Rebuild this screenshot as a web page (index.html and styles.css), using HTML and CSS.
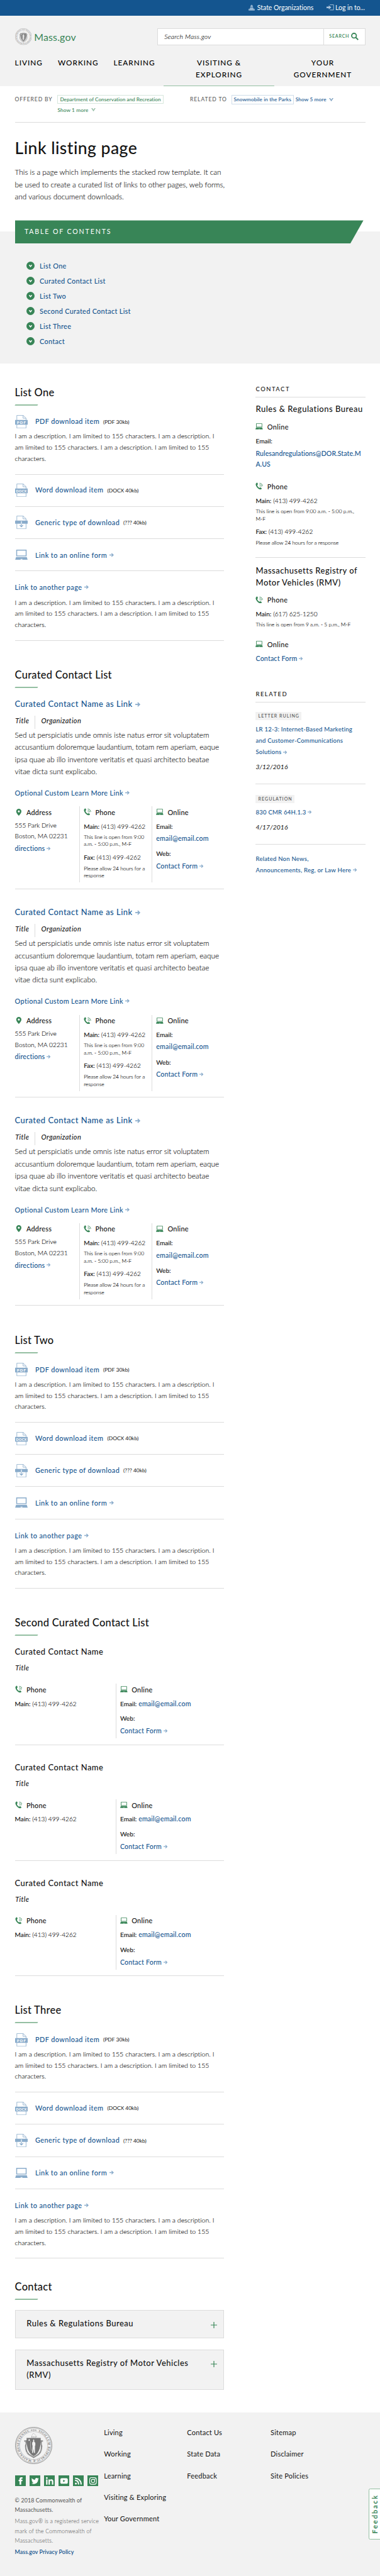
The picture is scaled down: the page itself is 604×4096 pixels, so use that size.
FILE: index.html
```html
<!DOCTYPE html>
<html lang="en">
<head>
<meta charset="utf-8">
<title>Link listing page | Mass.gov</title>
<link rel="stylesheet" href="styles.css">
</head>
<body>
<svg class="sprite" aria-hidden="true">
  <symbol id="arrow" viewBox="0 0 12 12"><path d="M0 6h9.500M5.600 1.600 10.200 6l-4.600 4.400" fill="none" stroke="currentColor" stroke-width="2.300"/></symbol>
  <symbol id="chev" viewBox="0 0 12 9"><path d="M0 0 3.300 0 6 4.200 8.700 0 12 0 6 9z" fill="currentColor"/></symbol>
  <symbol id="laptop" viewBox="0 0 34 28"><path d="M3 0h28v18H3zM5.500 2.500v13h23v-13z" fill="currentColor" fill-rule="evenodd"/><path d="M2.500 20h29L34 28H0zM14.500 25h5.500l-.5 1.500h-4.500z" fill="currentColor" fill-rule="evenodd"/></symbol>
  <symbol id="phone" viewBox="0 0 20 20"><path d="M4.500 1C5.500.6 7 4.800 6.500 5.600 6 6.500 4.800 6.800 5 8c.6 2.500 3 5.500 5.200 6.600 1.200.4 1.800-1 2.800-1.200 1-.2 4.500 2.400 4 3.400-.8 1.900-3 2.700-5 2.200C6.500 17.500.8 11 .8 5.200.8 3.300 2.500 1.400 4.500 1z" fill="currentColor"/><g fill="none" stroke="currentColor" stroke-width="1.500"><path d="M11 9.500a2.500 2.500 0 0 1 2.600 2"/><path d="M11 6c3 0 5 2 5.400 5"/><path d="M11 2.200c5 .2 8 3.800 8.200 8"/></g></symbol>
  <symbol id="pin" viewBox="0 0 14 19"><path d="M7 0a7 7 0 0 1 7 7c0 4.500-4 8-7 12C4 15 0 11.500 0 7a7 7 0 0 1 7-7zm0 4.300a2.700 2.700 0 1 0 0 5.400 2.700 2.700 0 0 0 0-5.400z" fill="currentColor"/></symbol>
  <symbol id="sheet" viewBox="0 0 34 36"><path d="M4.700.7h17l7.800 7.600v27H4.700z" fill="#fff" stroke="currentColor" stroke-width="1.400"/><path d="M21.500.7v7.800h8" fill="none" stroke="currentColor" stroke-width="1.400"/></symbol>
  <symbol id="pdf" viewBox="0 0 34 36"><use href="#sheet"/><path d="M0 13h34v13H0z" fill="currentColor"/><text x="17" y="23.400" text-anchor="middle" textLength="25" class="icon-label">PDF</text></symbol>
  <symbol id="docx" viewBox="0 0 34 36"><use href="#sheet"/><path d="M0 13h34v13H0z" fill="currentColor"/><text x="17" y="23.400" text-anchor="middle" textLength="29" lengthAdjust="spacingAndGlyphs" class="icon-label">DOCX</text></symbol>
  <symbol id="file" viewBox="0 0 34 36"><use href="#sheet"/><path d="M0 13h34v8.500H0z" fill="currentColor"/><path d="M17 15v7" stroke="#fff" stroke-width="2"/><path d="M17 21.500v8M12.500 25.500 17 30l4.500-4.500" fill="none" stroke="currentColor" stroke-width="2"/></symbol>
  <symbol id="seal" viewBox="0 0 100 100">
    <g fill="none" stroke="currentColor"><circle cx="50" cy="50" r="49.200" stroke-width="1.300"/><circle cx="50" cy="50" r="46.700" stroke-width=".7"/><circle cx="50" cy="50" r="37.500" stroke-width="1" stroke-dasharray="1.200 .8"/></g>
    <path id="ring" d="M50 11a39 39 0 1 1-.01 0" fill="none"/>
    <text class="seal-text"><textPath href="#ring" startOffset="13" textLength="221">SIGILLUM REIPUBLICÆ MASSACHUSETTENSIS.</textPath></text>
    <path d="M41 8.500 46 7v3zM59 8.500 54 7v3z" fill="currentColor"/><circle cx="50" cy="8.500" r="2" fill="none" stroke="currentColor"/>
    <path d="M25 38h5v7l-1.500 6c0 12 4 20 10 24l11.500 7 11.500-7c6-4 10-12 10-24L70 45v-7h5" fill="none" stroke="currentColor" stroke-width="3.600" stroke-dasharray="2.600 .7"/>
    <path d="M31 29.500h38c0 20-1 39-19 49.500C32 68.500 31 49.500 31 29.500z" fill="currentColor"/>
    <path d="M45 28c-1-4 1-7 4-11 3 1 6 5 10 10" fill="none" stroke="currentColor" stroke-width=".5"/>
    <path d="M44 27h3m2 0h3m2 0h3" stroke="currentColor" stroke-width="1.600"/>
    <path d="m38 32 .9 2.200 2.300.2-1.800 1.500.6 2.300-2-1.300-2 1.300.6-2.300-1.800-1.500 2.300-.2z" fill="#f2f2f2"/>
    <path d="M48.500 36c0-3 3-3 3 0v4l3 3v7l-1 1v19h-2.500l-1-11-1.500 11H46l1-19-1-3v-6l2.500-2z" fill="#f2f2f2"/><path d="M42 38c-1.500 9-.5 18 2 26" fill="none" stroke="#f2f2f2" stroke-width=".8"/>
  </symbol>
</svg>

<div class="page">
  <div class="utility">
    <a class="utility-item"><svg class="ic-dome" viewBox="0 0 16 16"><path d="M8 0v2M5 6a3 4 0 0 1 6 0zM4.500 7h7v2h-7zM3.500 10h9v2h-9zM0 12.500h3v-.5h10v.5h3V16H0z" fill="#a9c3dc" stroke="#a9c3dc" stroke-width=".6"/><path d="M2 13.300v1.500m3-1.500v1.500m3-1.500v1.500m3-1.500v1.500m3-1.500v1.500M6.500 7.500V9m3-1.500V9" stroke="#14558f" stroke-width=".8"/></svg><span>State Organizations</span></a>
    <a class="utility-item"><svg class="ic-login" viewBox="0 0 20 16"><path d="M9 1h10v14H9" fill="none" stroke="#a9c3dc" stroke-width="1.600"/><path d="M0 6h6V2.500L13 8l-7 5.500V10H0z" fill="#a9c3dc"/></svg><span>Log in to...</span></a>
  </div>

  <header class="header">
    <div class="brand-row">
      <div class="brand"><svg class="brand-seal"><use href="#seal"/></svg><span>Mass.gov</span></div>
      <div class="search"><span class="search-input">Search Mass.gov</span><span class="search-btn">SEARCH<svg viewBox="0 0 20 20"><circle cx="8" cy="8" r="6.300" fill="none" stroke="currentColor" stroke-width="3"/><path d="m12.500 12.500 6.500 6.500" stroke="currentColor" stroke-width="3.400"/></svg></span></div>
    </div>
    <nav class="nav"><a>LIVING</a><a>WORKING</a><a>LEARNING</a><a class="nav-active">VISITING &amp;<br>EXPLORING</a><a class="nav-last">YOUR<br>GOVERNMENT</a></nav>
  </header>

  <div class="relations">
    <div class="rel rel-green"><span class="rel-label">OFFERED BY</span><span class="rel-body"><a class="chip">Department of Conservation and Recreation</a><a class="more">Show 1 more<svg><use href="#chev"/></svg></a></span></div>
    <div class="rel rel-blue"><span class="rel-label">RELATED TO</span><span class="rel-body"><a class="chip">Snowmobile in the Parks</a><a class="more">Show 5 more<svg><use href="#chev"/></svg></a></span></div>
  </div>

  <div class="intro">
    <h1>Link listing page</h1>
    <p>This is a page which implements the stacked row template. It can be used to create a curated list of links to other pages, web forms, and various document downloads.</p>
  </div>

  <section class="toc">
    <div class="toc-banner">TABLE OF CONTENTS</div>
    <ul class="toc-list">
      <li><svg viewBox="0 0 22 22"><circle cx="11" cy="11" r="11"/><path d="m7.500 9 3.500 4.200L14.500 9"/></svg><a>List One</a></li>
      <li><svg viewBox="0 0 22 22"><circle cx="11" cy="11" r="11"/><path d="m7.500 9 3.500 4.200L14.500 9"/></svg><a>Curated Contact List</a></li>
      <li><svg viewBox="0 0 22 22"><circle cx="11" cy="11" r="11"/><path d="m7.500 9 3.500 4.200L14.500 9"/></svg><a>List Two</a></li>
      <li><svg viewBox="0 0 22 22"><circle cx="11" cy="11" r="11"/><path d="m7.500 9 3.500 4.200L14.500 9"/></svg><a>Second Curated Contact List</a></li>
      <li><svg viewBox="0 0 22 22"><circle cx="11" cy="11" r="11"/><path d="m7.500 9 3.500 4.200L14.500 9"/></svg><a>List Three</a></li>
      <li><svg viewBox="0 0 22 22"><circle cx="11" cy="11" r="11"/><path d="m7.500 9 3.500 4.200L14.500 9"/></svg><a>Contact</a></li>
    </ul>
  </section>

  <div class="columns">
    <main class="main">
      <section class="block">
        <h2>List One</h2>
        <div class="dl"><div class="dl-row"><svg><use href="#pdf"/></svg><a class="link">PDF download item</a><small>(PDF 30kb)</small></div><p>I am a description. I am limited to 155 characters. I am a description. I am limited to 155 characters. I am a description. I am limited to 155 characters.</p></div>
        <div class="dl"><div class="dl-row"><svg><use href="#docx"/></svg><a class="link">Word download item</a><small>(DOCX 40kb)</small></div></div>
        <div class="dl"><div class="dl-row"><svg><use href="#file"/></svg><a class="link">Generic type of download</a><small>(??? 40kb)</small></div></div>
        <div class="dl"><div class="dl-row dl-form"><svg class="ic-form"><use href="#laptop"/></svg><a class="link">Link to an online form</a><svg class="arrow"><use href="#arrow"/></svg></div></div>
        <div class="dl dl-page"><div class="dl-link"><a class="link">Link to another page</a><svg class="arrow"><use href="#arrow"/></svg></div><p>I am a description. I am limited to 155 characters. I am a description. I am limited to 155 characters. I am a description. I am limited to 155 characters.</p></div>
      </section>

      <section class="block curated">
        <h2>Curated Contact List</h2>
        <article class="person">
          <h3><a class="link">Curated Contact Name as Link</a><svg class="arrow arrow-lg"><use href="#arrow"/></svg></h3>
          <div class="role"><em>Title</em><em>Organization</em></div>
          <p>Sed ut perspiciatis unde omnis iste natus error sit voluptatem accusantium doloremque laudantium, totam rem aperiam, eaque ipsa quae ab illo inventore veritatis et quasi architecto beatae vitae dicta sunt explicabo.</p>
          <div class="learn"><a class="link">Optional Custom Learn More Link</a><svg class="arrow"><use href="#arrow"/></svg></div>
          <div class="cards">
            <div class="card"><h4><svg class="ic-pin"><use href="#pin"/></svg>Address</h4><div class="addr">555 Park Drive<br>Boston, MA 02231</div><div class="dir"><a class="link">directions</a><svg class="arrow"><use href="#arrow"/></svg></div></div>
            <div class="card"><h4><svg class="ic-phone"><use href="#phone"/></svg>Phone</h4><div class="num"><b>Main:</b> (413) 499-4262</div><div class="note">This line is open from 9:00 a.m. - 5:00 p.m., M-F</div><div class="num num-fax"><b>Fax:</b> (413) 499-4262</div><div class="note">Please allow 24 hours for a response</div></div>
            <div class="card"><h4><svg class="ic-lap"><use href="#laptop"/></svg>Online</h4><div class="num"><b>Email:</b></div><div class="url"><a class="link">email@email.com</a></div><div class="num num-web"><b>Web:</b></div><div class="url"><a class="link">Contact Form</a><svg class="arrow"><use href="#arrow"/></svg></div></div>
          </div>
        </article>
        <article class="person">
          <h3><a class="link">Curated Contact Name as Link</a><svg class="arrow arrow-lg"><use href="#arrow"/></svg></h3>
          <div class="role"><em>Title</em><em>Organization</em></div>
          <p>Sed ut perspiciatis unde omnis iste natus error sit voluptatem accusantium doloremque laudantium, totam rem aperiam, eaque ipsa quae ab illo inventore veritatis et quasi architecto beatae vitae dicta sunt explicabo.</p>
          <div class="learn"><a class="link">Optional Custom Learn More Link</a><svg class="arrow"><use href="#arrow"/></svg></div>
          <div class="cards">
            <div class="card"><h4><svg class="ic-pin"><use href="#pin"/></svg>Address</h4><div class="addr">555 Park Drive<br>Boston, MA 02231</div><div class="dir"><a class="link">directions</a><svg class="arrow"><use href="#arrow"/></svg></div></div>
            <div class="card"><h4><svg class="ic-phone"><use href="#phone"/></svg>Phone</h4><div class="num"><b>Main:</b> (413) 499-4262</div><div class="note">This line is open from 9:00 a.m. - 5:00 p.m., M-F</div><div class="num num-fax"><b>Fax:</b> (413) 499-4262</div><div class="note">Please allow 24 hours for a response</div></div>
            <div class="card"><h4><svg class="ic-lap"><use href="#laptop"/></svg>Online</h4><div class="num"><b>Email:</b></div><div class="url"><a class="link">email@email.com</a></div><div class="num num-web"><b>Web:</b></div><div class="url"><a class="link">Contact Form</a><svg class="arrow"><use href="#arrow"/></svg></div></div>
          </div>
        </article>
        <article class="person">
          <h3><a class="link">Curated Contact Name as Link</a><svg class="arrow arrow-lg"><use href="#arrow"/></svg></h3>
          <div class="role"><em>Title</em><em>Organization</em></div>
          <p>Sed ut perspiciatis unde omnis iste natus error sit voluptatem accusantium doloremque laudantium, totam rem aperiam, eaque ipsa quae ab illo inventore veritatis et quasi architecto beatae vitae dicta sunt explicabo.</p>
          <div class="learn"><a class="link">Optional Custom Learn More Link</a><svg class="arrow"><use href="#arrow"/></svg></div>
          <div class="cards">
            <div class="card"><h4><svg class="ic-pin"><use href="#pin"/></svg>Address</h4><div class="addr">555 Park Drive<br>Boston, MA 02231</div><div class="dir"><a class="link">directions</a><svg class="arrow"><use href="#arrow"/></svg></div></div>
            <div class="card"><h4><svg class="ic-phone"><use href="#phone"/></svg>Phone</h4><div class="num"><b>Main:</b> (413) 499-4262</div><div class="note">This line is open from 9:00 a.m. - 5:00 p.m., M-F</div><div class="num num-fax"><b>Fax:</b> (413) 499-4262</div><div class="note">Please allow 24 hours for a response</div></div>
            <div class="card"><h4><svg class="ic-lap"><use href="#laptop"/></svg>Online</h4><div class="num"><b>Email:</b></div><div class="url"><a class="link">email@email.com</a></div><div class="num num-web"><b>Web:</b></div><div class="url"><a class="link">Contact Form</a><svg class="arrow"><use href="#arrow"/></svg></div></div>
          </div>
        </article>
      </section>

      <section class="block">
        <h2>List Two</h2>
        <div class="dl"><div class="dl-row"><svg><use href="#pdf"/></svg><a class="link">PDF download item</a><small>(PDF 30kb)</small></div><p>I am a description. I am limited to 155 characters. I am a description. I am limited to 155 characters. I am a description. I am limited to 155 characters.</p></div>
        <div class="dl"><div class="dl-row"><svg><use href="#docx"/></svg><a class="link">Word download item</a><small>(DOCX 40kb)</small></div></div>
        <div class="dl"><div class="dl-row"><svg><use href="#file"/></svg><a class="link">Generic type of download</a><small>(??? 40kb)</small></div></div>
        <div class="dl"><div class="dl-row dl-form"><svg class="ic-form"><use href="#laptop"/></svg><a class="link">Link to an online form</a><svg class="arrow"><use href="#arrow"/></svg></div></div>
        <div class="dl dl-page"><div class="dl-link"><a class="link">Link to another page</a><svg class="arrow"><use href="#arrow"/></svg></div><p>I am a description. I am limited to 155 characters. I am a description. I am limited to 155 characters. I am a description. I am limited to 155 characters.</p></div>
      </section>

      <section class="block">
        <h2>Second Curated Contact List</h2>
        <article class="person person-short">
          <h3>Curated Contact Name</h3>
          <div class="role"><em>Title</em></div>
          <div class="cards">
            <div class="card"><h4><svg class="ic-phone"><use href="#phone"/></svg>Phone</h4><div class="num"><b>Main:</b> (413) 499-4262</div></div>
            <div class="card"><h4><svg class="ic-lap"><use href="#laptop"/></svg>Online</h4><div class="num"><b>Email:</b> <a class="link">email@email.com</a></div><div class="num num-web"><b>Web:</b></div><div class="url"><a class="link">Contact Form</a><svg class="arrow"><use href="#arrow"/></svg></div></div>
          </div>
        </article>
        <article class="person person-short">
          <h3>Curated Contact Name</h3>
          <div class="role"><em>Title</em></div>
          <div class="cards">
            <div class="card"><h4><svg class="ic-phone"><use href="#phone"/></svg>Phone</h4><div class="num"><b>Main:</b> (413) 499-4262</div></div>
            <div class="card"><h4><svg class="ic-lap"><use href="#laptop"/></svg>Online</h4><div class="num"><b>Email:</b> <a class="link">email@email.com</a></div><div class="num num-web"><b>Web:</b></div><div class="url"><a class="link">Contact Form</a><svg class="arrow"><use href="#arrow"/></svg></div></div>
          </div>
        </article>
        <article class="person person-short">
          <h3>Curated Contact Name</h3>
          <div class="role"><em>Title</em></div>
          <div class="cards">
            <div class="card"><h4><svg class="ic-phone"><use href="#phone"/></svg>Phone</h4><div class="num"><b>Main:</b> (413) 499-4262</div></div>
            <div class="card"><h4><svg class="ic-lap"><use href="#laptop"/></svg>Online</h4><div class="num"><b>Email:</b> <a class="link">email@email.com</a></div><div class="num num-web"><b>Web:</b></div><div class="url"><a class="link">Contact Form</a><svg class="arrow"><use href="#arrow"/></svg></div></div>
          </div>
        </article>
      </section>

      <section class="block">
        <h2>List Three</h2>
        <div class="dl"><div class="dl-row"><svg><use href="#pdf"/></svg><a class="link">PDF download item</a><small>(PDF 30kb)</small></div><p>I am a description. I am limited to 155 characters. I am a description. I am limited to 155 characters. I am a description. I am limited to 155 characters.</p></div>
        <div class="dl"><div class="dl-row"><svg><use href="#docx"/></svg><a class="link">Word download item</a><small>(DOCX 40kb)</small></div></div>
        <div class="dl"><div class="dl-row"><svg><use href="#file"/></svg><a class="link">Generic type of download</a><small>(??? 40kb)</small></div></div>
        <div class="dl"><div class="dl-row dl-form"><svg class="ic-form"><use href="#laptop"/></svg><a class="link">Link to an online form</a><svg class="arrow"><use href="#arrow"/></svg></div></div>
        <div class="dl dl-page"><div class="dl-link"><a class="link">Link to another page</a><svg class="arrow"><use href="#arrow"/></svg></div><p>I am a description. I am limited to 155 characters. I am a description. I am limited to 155 characters. I am a description. I am limited to 155 characters.</p></div>
      </section>

      <section class="block block-contact">
        <h2>Contact</h2>
        <div class="accordion"><span>Rules &amp; Regulations Bureau</span><svg viewBox="0 0 17 17"><path d="M8.500 0v17M0 8.500h17"/></svg></div>
        <div class="accordion"><span>Massachusetts Registry of Motor Vehicles (RMV)</span><svg viewBox="0 0 17 17"><path d="M8.500 0v17M0 8.500h17"/></svg></div>
      </section>
    </main>

    <aside class="side">
      <h5>CONTACT</h5>
      <section class="side-contact">
        <h3>Rules &amp; Regulations Bureau</h3>
        <h4><svg class="ic-lap"><use href="#laptop"/></svg>Online</h4>
        <div class="num"><b>Email:</b></div>
        <div class="side-mail"><a class="link">Rulesandregulations@DOR.State.M<wbr>A.US</a></div>
        <h4 class="h4-second"><svg class="ic-phone"><use href="#phone"/></svg>Phone</h4>
        <div class="num"><b>Main:</b> (413) 499-4262</div>
        <div class="note">This line is open from 9:00 a.m. - 5:00 p.m.,<br>M-F</div>
        <div class="num num-fax"><b>Fax:</b> (413) 499-4262</div>
        <div class="note note-last">Please allow 24 hours for a response</div>
      </section>
      <section class="side-contact side-contact-last">
        <h3>Massachusetts Registry of Motor Vehicles (RMV)</h3>
        <h4><svg class="ic-phone"><use href="#phone"/></svg>Phone</h4>
        <div class="num"><b>Main:</b> (617) 625-1250</div>
        <div class="note">This line is open from 9 a.m. - 5 p.m., M-F</div>
        <h4 class="h4-second"><svg class="ic-lap"><use href="#laptop"/></svg>Online</h4>
        <div class="url"><a class="link">Contact Form</a><svg class="arrow"><use href="#arrow"/></svg></div>
      </section>
      <h5 class="h5-related">RELATED</h5>
      <div class="rel-item"><span class="tag">LETTER RULING</span><div><a class="link">LR 12-3: Internet-Based Marketing<br>and Customer-Communications<br>Solutions</a><svg class="arrow"><use href="#arrow"/></svg></div><em>3/12/2016</em></div>
      <div class="rel-item rel-item-2"><span class="tag">REGULATION</span><div><a class="link">830 CMR 64H.1.3</a><svg class="arrow"><use href="#arrow"/></svg></div><em>4/17/2016</em></div>
      <div class="rel-item rel-item-3"><div><a class="link">Related Non News,<br>Announcements, Reg, or Law Here</a><svg class="arrow"><use href="#arrow"/></svg></div></div>
    </aside>
  </div>

  <footer class="footer">
    <div class="foot-brand">
      <svg class="foot-seal"><use href="#seal"/></svg>
      <div class="social">
        <svg viewBox="0 0 30 30"><path d="M12 25v-9.500H9.500V12H12V9.500C12 6.500 13.500 5 16.500 5H20v3.800h-2c-1 0-1.500.3-1.500 1.200v2H20l-.5 3.500h-3V25z"/></svg>
        <svg viewBox="0 0 30 30"><path d="M25 8.800c-.8.4-1.500.5-2.300.7.8-.5 1.500-1.300 1.700-2.200-.8.4-1.700.8-2.600 1a4.200 4.200 0 0 0-7.100 3.800c-3.500-.2-6.500-1.800-8.600-4.400-1 2-.6 4.300 1.300 5.600-.7 0-1.400-.2-1.900-.5 0 2 1.400 3.700 3.300 4.200-.6.1-1.200.2-1.800 0 .5 1.700 2 2.800 3.800 2.900A8.500 8.500 0 0 1 5 21.700 11.500 11.500 0 0 0 11.300 23.500c7.600 0 12-6.300 11.700-12.300.8-.6 1.500-1.400 2-2.400z"/></svg>
        <svg viewBox="0 0 30 30"><circle cx="7.500" cy="7" r="2.300"/><path d="M5.600 11h3.800v14H5.600zM12 11h3.600v2c2-3.500 9.400-3.500 9.400 3.500V25h-3.800v-7.800c0-4-5.400-3.600-5.400 0V25H12z"/></svg>
        <svg viewBox="0 0 30 30"><path fill-rule="evenodd" d="M9 7.500h12c3 0 4 1.500 4 4v7c0 2.500-1 4-4 4H9c-3 0-4-1.500-4-4v-7c0-2.500 1-4 4-4zm3.500 4.300v6.400l6-3.200z"/></svg>
        <svg viewBox="0 0 30 30"><circle cx="7.800" cy="22.200" r="2.600"/><path d="M5.500 13.500c5.500 0 9.500 4 9.500 11M5.500 7.500C14 7.500 22 14 22 24.500" fill="none" stroke="#fff" stroke-width="3.400"/></svg>
        <svg viewBox="0 0 30 30"><g fill="none" stroke="#fff" stroke-width="1.800"><rect x="6" y="6" width="18" height="18" rx="5"/><circle cx="15" cy="15" r="4.600"/></g><circle cx="20.300" cy="9.800" r="1.300"/></svg>
      </div>
      <p class="copy">© 2018 Commonwealth of Massachusetts.</p>
      <p class="reg">Mass.gov® is a registered service mark of the Commonwealth of Massachusetts.</p>
      <a class="privacy">Mass.gov Privacy Policy</a>
    </div>
    <div class="foot-links"><a>Living</a><a>Working</a><a>Learning</a><a>Visiting &amp; Exploring</a><a>Your Government</a></div>
    <div class="foot-links"><a>Contact Us</a><a>State Data</a><a>Feedback</a></div>
    <div class="foot-links"><a>Sitemap</a><a>Disclaimer</a><a>Site Policies</a></div>
    <div class="feedback"><span>Feedback</span></div>
  </footer>
</div>
</body>
</html>
```
FILE: styles.css
```css
* { box-sizing: border-box; }
html, body { margin: 0; padding: 0; }
body {
  background: #fff;
  overflow-x: hidden;
  color: #141414;
  font-family: Lato, "Noto Sans", sans-serif;
  font-size: 18px;
  font-variant-ligatures: none;
}
h1, h2, h3, h4, h5, p, ul { margin: 0; padding: 0; font-weight: 500; }
p { font-weight: 300; }
p, .addr, .num, .note, .search-input { -webkit-text-stroke: .2px currentColor; }
svg { display: block; flex: none; }
.sprite { display: none; }
.page { width: 1024px; zoom: 0.59; overflow: hidden; }
.icon-label { font: 900 10.500px Lato, sans-serif; fill: #fff; }
.seal-text { font: 600 8.500px "Liberation Serif", serif; fill: currentColor; }

/* utility bar */
.utility { height: 43px; padding: 0 41px 2px 0; display: flex; justify-content: flex-end; align-items: center; gap: 35px; background: #14558f; color: #fff; font-size: 17.800px; letter-spacing: -.05px; }
.utility-item { display: flex; align-items: center; gap: 6px; }
.utility-item:last-child { gap: 4px; }
.ic-dome { width: 17px; height: 16px; }
.ic-login { width: 20px; height: 16px; }

/* header */
.header { height: 190px; padding: 33px 40px 0; background: #f2f2f2; }
.brand-row { display: flex; justify-content: space-between; height: 46px; }
.brand { display: flex; align-items: center; gap: 7px; color: #388557; font-size: 27px; letter-spacing: .3px; }
.brand span { padding-top: 2px; }
.brand-seal { width: 45px; height: 45px; color: #8a8a8a; }
.search { width: 560px; display: flex; background: #fff; border: 2px solid #dcdcdc; line-height: 42px; }
.search-input { flex: 1; padding-left: 17px; font-style: italic; font-weight: 300; font-size: 18px; letter-spacing: .3px; }
.search-btn { width: 111px; border-left: 2px solid #dcdcdc; display: flex; align-items: center; padding-left: 14px; gap: 5px; color: #388557; font-size: 12px; font-weight: 600; letter-spacing: 1.300px; }
.search-btn svg { width: 20px; height: 20px; }
.nav { margin-top: 33px; display: grid; grid-template-columns: 116px 150px 135px 298px 1fr; font-size: 20px; font-weight: 500; line-height: 31px; letter-spacing: 1.650px; height: 78px; color: #000; }
.nav-active { text-align: center; background: linear-gradient(#94bfa2, #94bfa2) bottom / 100% 3px no-repeat; }
.nav-last { text-align: center; padding-left: 16px; }

/* relations */
.relations { margin: 0 40px; height: 97px; padding-top: 23px; display: grid; grid-template-columns: 472px 1fr; border-bottom: 1.700px solid #dcdcdc; }
.rel { display: flex; line-height: 25px; }
.rel-green { color: #388557; }
.rel-blue { color: #14558f; }
.rel-label { width: 115px; color: #535353; font-size: 14.500px; letter-spacing: 1.500px; white-space: nowrap; }
.rel-blue .rel-label { width: 111px; }
.rel-body { display: flex; flex-wrap: wrap; align-content: flex-start; gap: 4px 5px; width: 300px; font-size: 14px; font-weight: 500; }
.chip { border: 2px solid #d7e7dd; padding: 0 5px; line-height: 21px; white-space: nowrap; }
.rel-blue .chip { border-color: #d0dde9; letter-spacing: .15px; }
.more { display: flex; align-items: center; gap: 8px; white-space: nowrap; letter-spacing: .2px; }
.more svg { width: 12px; height: 9px; opacity: .5; }

/* intro */
.intro { padding: 42.600px 40px 46.700px; }
h1 { font-size: 45px; line-height: 54px; letter-spacing: .75px; }
.intro p { margin-top: 21.700px; width: 570px; font-size: 20px; line-height: 33px; }

/* table of contents */
.toc { padding: 0 45px 39.500px 40px; background: linear-gradient(#fff 30px, #f2f2f2 30px); }
.toc-banner { height: 62px; padding-left: 26px; line-height: 62px; background: #388557; color: #fff; font-size: 18px; letter-spacing: 3.150px; clip-path: polygon(0 0, 100% 0, 904px 100%, 0 100%); }
.toc-list { list-style: none; padding: 40.200px 0 0 32px; }
.toc-list li { display: flex; align-items: center; gap: 13px; height: 40.700px; line-height: 40.700px; }
.toc-list svg { width: 22px; height: 22px; fill: #388557; }
.toc-list path { fill: none; stroke: #fff; stroke-width: 2.400; }
.toc-list a { color: #14558f; font-size: 18.500px; font-weight: 500; letter-spacing: .5px; }

/* two columns */
.columns { display: grid; grid-template-columns: 564px 295px; gap: 85px; padding: 60.700px 40px 60px; align-items: start; }
.link { color: #14558f; font-weight: 500; }
.arrow { width: 12px; height: 12px; color: #8aaccb; }
.block + .block { margin-top: 74.500px; }
.curated + .block { margin-top: 76px; }
.block + .block-contact { margin-top: 59px; }
h2 { font-size: 28px; line-height: 34px; letter-spacing: .4px; }
h2::after { content: ""; display: block; width: 61px; height: 3px; margin-top: 15.300px; background: #94bfa2; transform: skewX(-30deg); }

/* downloads */
.dl { padding: 25px 0; border-bottom: 1.700px solid #dcdcdc; }
h2 + .dl { padding-top: 26.500px; }
.dl-row { display: flex; align-items: center; height: 35.200px; font-size: 18.500px; letter-spacing: .7px; }
.dl-row .link, .dl-row small { margin-top: -3px; }
.dl-row svg { width: 34px; height: 36px; margin-right: 21px; color: #8aaccb; }
.dl-row small { font-size: 14.400px; margin-left: 10px; letter-spacing: 0; padding-top: 3px; }
.dl-row .ic-form { height: 28px; }
.dl-form .link { margin-top: 0; }
.dl-row .arrow, .dl-link .arrow { width: 12px; height: 12px; margin: 0 0 0 6px; }
.dl p { margin: 7.500px 0 .5px; line-height: 30px; font-size: 18px; }
.dl-page { padding-top: 28px; }
.dl-link { display: flex; align-items: center; height: 30px; font-size: 18.500px; letter-spacing: .7px; }
.dl-page p { margin-top: 12px; }

/* people */
.person { padding: 48px 0 16px; border-bottom: 1.700px solid #dcdcdc; }
h2 + .person { padding-top: 29.500px; }
h3 { font-size: 22px; line-height: 30px; letter-spacing: .82px; display: flex; align-items: center; }
.arrow-lg { width: 14px; height: 14px; margin-left: 7px; }
.role { display: flex; height: 35.700px; margin-top: 15.500px; line-height: 28px; font-size: 18.500px; font-weight: 500; letter-spacing: .65px; padding-left: 1px; }
.role em + em { margin-left: 14px; padding-left: 17px; border-left: 1.700px solid #dcdcdc; }
.person p { font-size: 20px; line-height: 33px; }
.learn { display: flex; align-items: center; height: 30px; margin-top: 25.700px; font-size: 18.500px; letter-spacing: .55px; }
.learn .arrow { margin-left: 6px; }
.cards { display: grid; grid-template-columns: 174px 195px 1fr; margin-top: 22px; height: 205px; }
.card + .card { border-left: 1.700px solid #dcdcdc; padding-left: 10px; }
h4 { display: flex; align-items: center; height: 30px; font-size: 18.500px; letter-spacing: .4px; }
h4 svg { color: #388557; margin-right: 11px; width: 20px; height: 20px; }
h4 .ic-lap { height: 17px; }
h4 .ic-pin { width: 20px; height: 19px; }
.addr { margin-top: 5.700px; font-size: 17.300px; font-weight: 300; line-height: 30px; }
.dir, .url { display: flex; align-items: center; height: 24px; font-size: 18px; letter-spacing: .3px; }
.dir { margin-top: 5px; }
.dir .arrow, .url .arrow { width: 11px; height: 11px; margin-left: 5px; }
.num { margin-top: 11px; height: 24px; line-height: 24px; font-size: 17.200px; font-weight: 300; white-space: nowrap; }
.num b { font-weight: 400; }
.num .link { font-size: 18px; letter-spacing: .3px; -webkit-text-stroke: 0; }
.note { margin-top: 8px; font-size: 14.200px; font-weight: 300; line-height: 20px; }
.card .note { width: 172px; }
.num-fax { margin-top: 11.500px; }
.num-fax + .note { margin-top: 9.500px; }
.url { margin-top: 9px; }
.num-web { margin-top: 17px; }

.person-short { padding-top: 46.200px; }
.person-short .role { margin-top: 13.500px; }
.person-short .cards { grid-template-columns: 272px 1fr; margin-top: 21px; height: 147.500px; }
.person-short .num-web { margin-top: 16px; }
.person-short .url { margin-top: 10px; }

/* accordions */
.accordion { display: flex; justify-content: space-between; margin-top: 30px; padding: 19px 17px 21px 30px; border: 2px solid #dcdcdc; background: #f2f2f2; font-size: 22px; font-weight: 500; line-height: 33px; letter-spacing: .85px; }
h2 + .accordion { margin-top: 27px; }
.accordion span { width: 460px; }
.accordion svg { width: 17px; height: 17px; margin-top: 11px; stroke: #388557; stroke-width: 2; }

/* sidebar */
.side { margin-top: -.7px; }
h5 { font-size: 16px; line-height: 20px; letter-spacing: 2.550px; padding-bottom: 10.500px; border-bottom: 2px solid #dcdcdc; }
.side-contact { padding: 15.400px 0 26.700px; border-bottom: 1.700px solid #dcdcdc; }
.side h3 { line-height: 33px; display: block; letter-spacing: .88px; }
.side h4 { margin-top: 14px; letter-spacing: .6px; }
.side .note { margin-top: 7.700px; }
.side .num { margin-top: 12px; }
.side .num-fax { margin-top: 11px; }
.side .note-last { margin-top: 10.500px; }
.side-mail { margin-top: 8px; font-size: 18px; line-height: 29px; letter-spacing: .12px; }
.side h4.h4-second { margin-top: 29.600px; }
.side-contact-last { padding: 18px 0 0; border: 0; }
.side-contact-last h4.h4-second { margin-top: 26.400px; }
.side-contact-last .url { margin-top: 12px; }
.h5-related { margin-top: 73.400px; }
.rel-item { padding: 25.500px 0 33px; border-bottom: 1.700px solid #dcdcdc; }
.rel-item-2 { padding-top: 28.500px; }
.tag { display: block; width: fit-content; height: 23px; padding: 0 5px 0 7px; margin-bottom: 9.700px; background: #f2f2f2; color: #535353; font-size: 12px; font-weight: 500; line-height: 23px; letter-spacing: 1.700px; }
.rel-item div { font-size: 16.200px; line-height: 30.700px; letter-spacing: .37px; white-space: nowrap; }
.rel-item .arrow { display: inline-block; width: 11px; height: 11px; margin-left: 5px; }
.rel-item em { display: block; margin-top: 11.700px; font-size: 17.500px; line-height: 24px; letter-spacing: .2px; }
.rel-item-3 { border: 0; padding-top: 24px; }

/* footer */
.footer { position: relative; height: 441px; padding: 0 40px; display: grid; grid-template-columns: 240px 224px 225px 1fr; background: #f2f2f2; }
.foot-brand { padding-top: 40px; }
.foot-seal { width: 100px; height: 100px; color: #777; }
.social { display: flex; gap: 9px; margin-top: 30px; }
.social svg { width: 30px; height: 30px; background: #388557; fill: #fff; }
.copy { margin-top: 24.400px; width: 200px; font-size: 15px; font-weight: 400; line-height: 25.500px; letter-spacing: .2px; color: #535353; -webkit-text-stroke: 0; }
.reg { margin-top: 5.700px; width: 228px; font-size: 15px; line-height: 26px; letter-spacing: .35px; color: #777; }
.privacy { display: block; margin-top: 4px; font-size: 15px; font-weight: 600; line-height: 26px; letter-spacing: .1px; color: #14558f; }
.foot-links { display: flex; flex-direction: column; padding-top: 26.600px; font-size: 18.800px; line-height: 57.900px; letter-spacing: .3px; white-space: nowrap; }
.feedback { position: absolute; right: -6px; top: 206px; width: 36px; height: 138px; border: 3px solid #94bfa2; border-radius: 4px; background: #fff; display: flex; align-items: center; justify-content: center; }
.feedback span { writing-mode: vertical-rl; transform: rotate(180deg); color: #388557; font-size: 18px; font-weight: 700; line-height: 20px; letter-spacing: 3.700px; }
```
